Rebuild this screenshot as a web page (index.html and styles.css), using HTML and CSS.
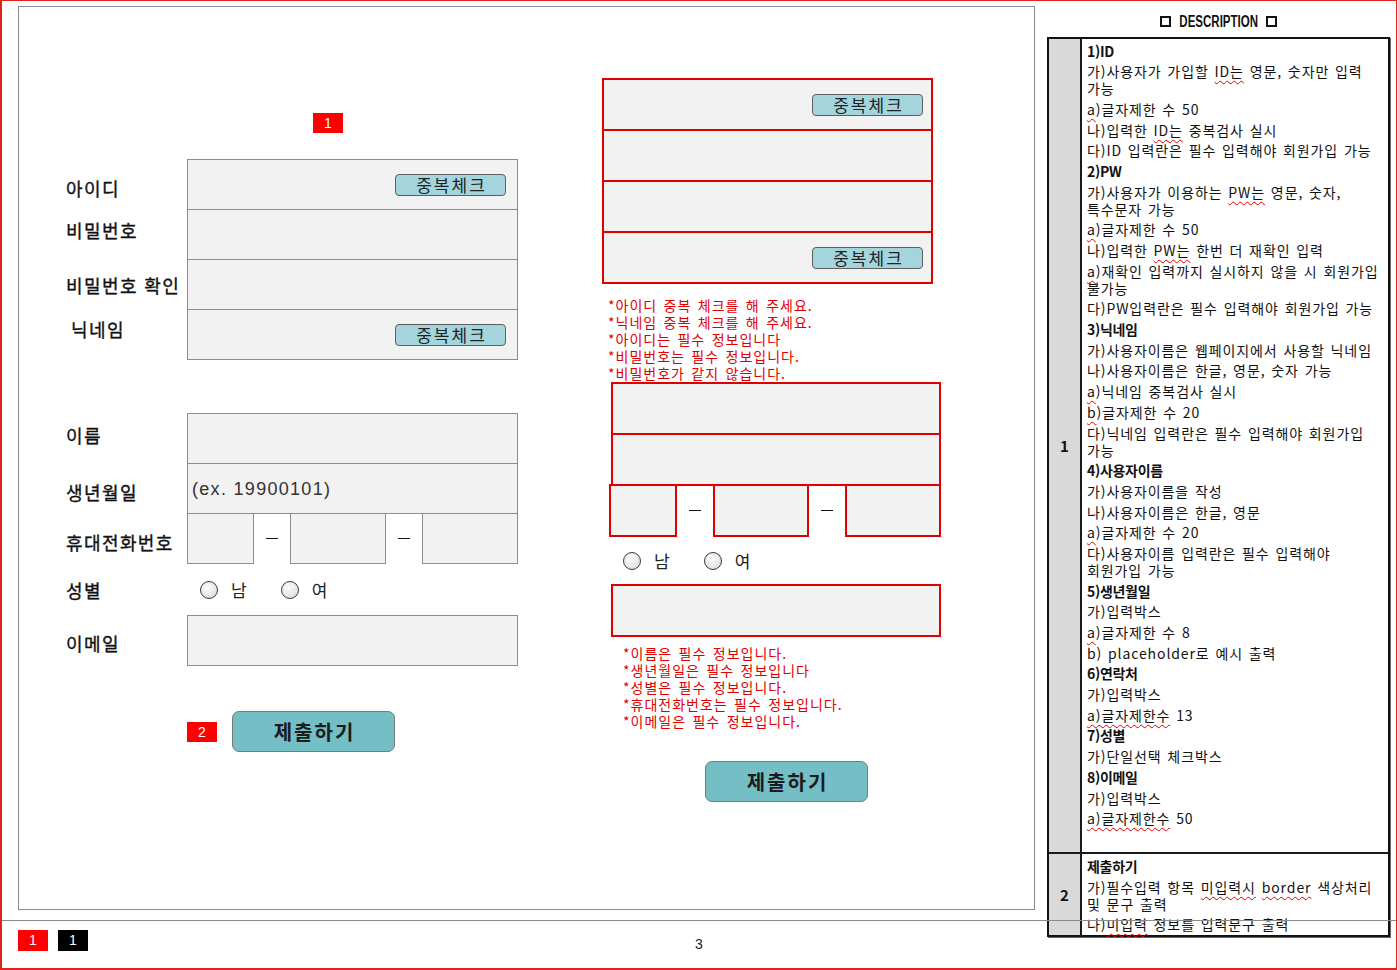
FILE: index.html
```html
<!DOCTYPE html>
<html lang="ko">
<head>
<meta charset="utf-8">
<title>회원가입 화면 설계</title>
<link rel="stylesheet" href="styles.css">
</head>
<body>
<div class="page">
  <div class="sheet">
    <div class="canvas">
      <div class="form-a">
        <div class="badge">1</div>
        <div class="stack">
          <div class="frow"><span class="lbl lbl-id">아이디</span><div class="fld"><button class="chk">중복체크</button></div></div>
          <div class="frow"><span class="lbl lbl-pw">비밀번호</span><div class="fld"></div></div>
          <div class="frow"><span class="lbl">비밀번호 확인</span><div class="fld"></div></div>
          <div class="frow"><span class="lbl lbl-nick">닉네임</span><div class="fld"><button class="chk">중복체크</button></div></div>
        </div>
        <div class="stack stack-2">
          <div class="frow"><span class="lbl lbl-name">이름</span><div class="fld"></div></div>
          <div class="frow"><span class="lbl lbl-dn">생년월일</span><div class="fld fld-ph"><span class="ph">(ex. 19900101)</span></div></div>
          <div class="frow"><span class="lbl lbl-dn">휴대전화번호</span>
            <div class="phone">
              <div class="pbox pb-first"></div><span class="dash"></span><div class="pbox"></div><span class="dash"></span><div class="pbox"></div>
            </div>
          </div>
          <div class="frow plain"><span class="lbl">성별</span>
            <div class="radios"><span class="radio"></span><span class="rtxt">남</span><span class="radio r2"></span><span class="rtxt">여</span></div>
          </div>
          <div class="frow"><span class="lbl lbl-mail">이메일</span><div class="fld"></div></div>
        </div>
        <div class="subrow">
          <div class="badge">2</div>
          <button class="submit">제출하기</button>
        </div>
      </div>

      <div class="form-b">
        <div class="estack">
          <div class="ebox"><button class="chk">중복체크</button></div>
          <div class="ebox"></div>
          <div class="ebox"></div>
          <div class="ebox"><button class="chk">중복체크</button></div>
        </div>
        <div class="msgs m1">
          <p>*아이디 중복 체크를 해 주세요.</p>
          <p>*닉네임 중복 체크를 해 주세요.</p>
          <p>*아이디는 필수 정보입니다</p>
          <p>*비밀번호는 필수 정보입니다.</p>
          <p>*비밀번호가 같지 않습니다.</p>
        </div>
        <div class="estack estack-2">
          <div class="ebox"></div>
          <div class="ebox"></div>
          <div class="ephone">
            <div class="epbox epb-first"></div><span class="dash"></span><div class="epbox"></div><span class="dash"></span><div class="epbox"></div>
          </div>
          <div class="egender">
            <div class="radios"><span class="radio"></span><span class="rtxt">남</span><span class="radio r2"></span><span class="rtxt">여</span></div>
          </div>
          <div class="ebox ebox-mail"></div>
        </div>
        <div class="msgs m2">
          <p>*이름은 필수 정보입니다.</p>
          <p>*생년월일은 필수 정보입니다</p>
          <p>*성별은 필수 정보입니다.</p>
          <p>*휴대전화번호는 필수 정보입니다.</p>
          <p>*이메일은 필수 정보입니다.</p>
        </div>
        <button class="submit submit-b">제출하기</button>
      </div>
    </div>

    <div class="desc">
      <div class="dtitle"><span class="sq"></span><span class="dword">DESCRIPTION</span><span class="sq"></span></div>
      <div class="dtable">
        <div class="dnum">1</div>
        <div class="dtext">
          <p class="h">1)ID</p>
          <p>가)사용자가 가입할 <span class="sp">ID는</span> 영문, 숫자만 입력</p>
          <p class="wr">가능</p>
          <p><span class="sp">a</span>)글자제한 수 50</p>
          <p>나)입력한 <span class="sp">ID는</span> 중복검사 실시</p>
          <p>다)ID 입력란은 필수 입력해야 회원가입 가능</p>
          <p class="h">2)PW</p>
          <p>가)사용자가 이용하는 <span class="sp">PW는</span> 영문, 숫자,</p>
          <p class="wr">특수문자 가능</p>
          <p><span class="sp">a</span>)글자제한 수 50</p>
          <p>나)입력한 <span class="sp">PW는</span> 한번 더 재확인 입력</p>
          <p><span class="sp">a</span>)재확인 입력까지 실시하지 않을 시 회원가입</p>
          <p class="wr">불가능</p>
          <p>다)PW입력란은 필수 입력해야 회원가입 가능</p>
          <p class="h">3)닉네임</p>
          <p>가)사용자이름은 웹페이지에서 사용할 닉네임</p>
          <p>나)사용자이름은 한글, 영문, 숫자 가능</p>
          <p><span class="sp">a</span>)닉네임 중복검사 실시</p>
          <p><span class="sp">b</span>)글자제한 수 20</p>
          <p>다)닉네임 입력란은 필수 입력해야 회원가입</p>
          <p class="wr">가능</p>
          <p class="h">4)사용자이름</p>
          <p>가)사용자이름을 작성</p>
          <p>나)사용자이름은 한글, 영문</p>
          <p><span class="sp">a</span>)글자제한 수 20</p>
          <p>다)사용자이름 입력란은 필수 입력해야</p>
          <p class="wr">회원가입 가능</p>
          <p class="h">5)생년월일</p>
          <p>가)입력박스</p>
          <p><span class="sp">a</span>)글자제한 수 8</p>
          <p>b) placeholder로 예시 출력</p>
          <p class="h">6)연락처</p>
          <p>가)입력박스</p>
          <p><span class="sp">a)글자제한수</span> 13</p>
          <p class="h">7)성별</p>
          <p>가)단일선택 체크박스</p>
          <p class="h">8)이메일</p>
          <p>가)입력박스</p>
          <p><span class="sp">a)글자제한수</span> 50</p>
        </div>
        <div class="dnum r2c">2</div>
        <div class="dtext r2c">
          <p class="h">제출하기</p>
          <p>가)필수입력 항목 <span class="sp">미입력시</span> <span class="sp">border</span> 색상처리</p>
          <p class="wr">및 문구 출력</p>
          <p>나)<span class="sp">미입력</span> 정보를 입력문구 출력</p>
        </div>
      </div>
    </div>
  </div>

  <div class="footer">
    <div class="fbadges"><span class="fbadge red">1</span><span class="fbadge black">1</span></div>
    <div class="pgnum">3</div>
    <div></div>
  </div>
  <div class="cutline"></div>
</div>
</body>
</html>
```

FILE: styles.css
```css
html, body {
  margin: 0;
  padding: 0;
  background: #fff;
}
body {
  font-family: "Noto Sans CJK KR", "Noto Sans", sans-serif;
  color: #111;
}
p { margin: 0; }
button { font-family: inherit; cursor: default; }

.page {
  position: relative;
  width: 1397px;
  height: 970px;
  box-sizing: border-box;
  border: 1px solid #e2231a;
  border-left-width: 2px;
  border-bottom-width: 2px;
  overflow: hidden;
}

.sheet {
  display: flex;
  align-items: flex-start;
  height: 919px;
  box-sizing: border-box;
  padding: 5px 0 0 16px;
}

/* ---------- wireframe canvas ---------- */
.canvas {
  flex: none;
  width: 1017px;
  height: 904px;
  box-sizing: border-box;
  border: 1px solid #8a8a8a;
  display: flex;
  align-items: flex-start;
  padding-left: 47px;
}

.badge {
  width: 30px;
  height: 20px;
  background: #ff0000;
  color: #fff;
  font: 14px/20px "Liberation Sans", sans-serif;
  text-align: center;
  flex: none;
}

.form-a {
  flex: none;
  width: 452px;
  margin-top: 106px;
}
.form-a > .badge { margin-left: 247px; }

.stack { margin-top: 26px; }
.stack-2 { margin-top: 53px; }

.frow {
  display: flex;
  align-items: center;
  height: 51px;
}
.stack .frow + .frow { margin-top: -1px; }
.stack .frow.plain,
.stack .frow.plain + .frow { margin-top: 0; }

.lbl {
  flex: none;
  width: 121px;
  box-sizing: border-box;
  font-size: 18px;
  line-height: 24px;
  letter-spacing: 1.4px;
  color: #111;
  white-space: nowrap;
  -webkit-text-stroke: 0.35px #111;
}
.lbl-id { padding-top: 7px; }
.lbl-pw { padding-bottom: 9px; }
.lbl-nick { padding-bottom: 11px; padding-left: 5px; }
.lbl-name { padding-bottom: 7px; }
.lbl-dn { padding-top: 7px; }
.lbl-mail { padding-top: 5px; }

.fld {
  flex: none;
  width: 331px;
  height: 51px;
  box-sizing: border-box;
  border: 1px solid #8c8c8c;
  background: #f2f2f2;
  display: flex;
  align-items: center;
  justify-content: flex-end;
  padding-right: 11px;
}
.fld-ph {
  justify-content: flex-start;
  padding: 0 0 0 4px;
}
.ph {
  font: 18px/22px "Liberation Sans", sans-serif;
  letter-spacing: 1.3px;
  color: #333;
}

.chk {
  width: 111px;
  height: 22px;
  box-sizing: border-box;
  padding: 0 0 0 2px;
  border: 1px solid #5e5e5e;
  border-radius: 4px;
  background: #a4d4dc;
  color: #222;
  font-size: 17px;
  line-height: 20px;
  letter-spacing: 2px;
}

.phone {
  display: flex;
  align-items: center;
  width: 331px;
  height: 51px;
}
.pbox {
  flex: none;
  width: 96px;
  height: 51px;
  box-sizing: border-box;
  border: 1px solid #8c8c8c;
  background: #f2f2f2;
}
.pbox.pb-first { width: 67px; }

.dash {
  flex: none;
  width: 36px;
  display: flex;
  justify-content: center;
}
.dash::before {
  content: "";
  width: 12px;
  height: 1px;
  background: #111;
}

.radios {
  display: flex;
  align-items: center;
  padding-left: 13px;
}
.radio {
  flex: none;
  width: 18px;
  height: 18px;
  box-sizing: border-box;
  border: 1px solid #3a3a3a;
  border-radius: 50%;
  background: radial-gradient(circle at 40% 35%, #fbfbfb 0%, #e6e6e6 60%, #d4d4d4 100%);
}
.radio.r2 { margin-left: 34px; }
.rtxt {
  margin-left: 13px;
  font-size: 17px;
  line-height: 22px;
  color: #222;
}

.subrow {
  display: flex;
  align-items: center;
  gap: 15px;
  margin-top: 45px;
  padding-left: 121px;
}
.submit {
  flex: none;
  width: 163px;
  height: 41px;
  box-sizing: border-box;
  padding: 0 0 0 2px;
  border: 1px solid #7a7a7a;
  border-radius: 7px;
  background: #74bec6;
  color: #1c1c1c;
  font-size: 20px;
  font-weight: 700;
  letter-spacing: 2px;
  line-height: 38px;
}

/* error-state form */
.form-b {
  flex: none;
  width: 339px;
  margin-left: 84px;
  margin-top: 71px;
}
.estack { width: 331px; }
.ebox {
  height: 53px;
  box-sizing: border-box;
  border: 2px solid #e00000;
  background: #f2f2f2;
  display: flex;
  align-items: center;
  justify-content: flex-end;
  padding-right: 8px;
}
.estack .ebox + .ebox { margin-top: -2px; }
.estack-2 {
  width: 330px;
  margin-left: 9px;
}
.ephone {
  display: flex;
  align-items: center;
  width: 332px;
  height: 53px;
  margin: -2px 0 0 -2px;
}
.epbox {
  flex: none;
  width: 96px;
  height: 53px;
  box-sizing: border-box;
  border: 2px solid #e00000;
  background: #f2f2f2;
}
.epbox.epb-first { width: 68px; }
.egender {
  height: 47px;
  display: flex;
  align-items: center;
}
.egender .radios { padding-left: 12px; }
.estack .egender + .ebox { margin-top: 0; }

.msgs {
  color: #e00000;
  font-size: 14px;
  line-height: 17px;
  letter-spacing: 1px;
  word-spacing: 1.5px;
  white-space: nowrap;
}
.m1 { margin-top: 13px; padding-left: 6px; }
.m2 { margin-top: 7.5px; padding-left: 21px; }
.submit-b {
  display: block;
  margin-top: 31.5px;
  margin-left: 103px;
}

/* ---------- description panel ---------- */
.desc {
  flex: none;
  width: 343px;
  margin-left: 12px;
}
.dtitle {
  height: 31px;
  display: flex;
  align-items: center;
  justify-content: center;
  gap: 8px;
}
.sq {
  flex: none;
  width: 11px;
  height: 11px;
  box-sizing: border-box;
  border: 2px solid #111;
}
.dword {
  display: inline-block;
  font: 700 16px/16px "Liberation Sans", sans-serif;
  color: #111;
  transform: scaleX(0.72);
  margin: 0 -15px;
}

.dtable {
  display: grid;
  grid-template-columns: 33px 1fr;
  grid-template-rows: 813px 83px;
  width: 343px;
  box-sizing: border-box;
  border: 2px solid #111;
  box-shadow: 1px 1px 0 #666;
}
.dnum {
  background: #d9d9d9;
  border-right: 2px solid #1a1a1a;
  display: flex;
  align-items: center;
  justify-content: center;
  font-size: 15px;
  font-weight: 700;
  color: #111;
}
.dtext {
  padding: 3.5px 0 0 5px;
  min-width: 0;
}
.r2c {
  border-top: 2px solid #1a1a1a;
}
.dtext.r2c { padding-top: 4px; }
.dtext p {
  margin: 3.7px 0 0;
  font-size: 14px;
  line-height: 17px;
  letter-spacing: 0.9px;
  word-spacing: 1px;
  white-space: nowrap;
  color: #111;
}
.dtext p:first-child { margin-top: 0; }
.dtext p.wr { margin-top: 0; }
.dtext p.h {
  font-weight: 700;
  letter-spacing: -0.3px;
}
.sp {
  text-decoration: underline wavy #e00000;
  text-decoration-thickness: 1px;
  text-underline-offset: 3px;
  text-decoration-skip-ink: none;
}

/* ---------- footer ---------- */
.footer {
  display: grid;
  grid-template-columns: 1fr auto 1fr;
  align-items: start;
  padding-top: 10px;
}
.fbadges {
  display: flex;
  gap: 10px;
  margin-left: 16px;
}
.fbadge {
  width: 30px;
  height: 21px;
  color: #fff;
  font: 14px/21px "Liberation Sans", sans-serif;
  text-align: center;
}
.fbadge.red { background: #ff0000; }
.fbadge.black { background: #000; }
.pgnum {
  padding-top: 6px;
  font: 14px/16px "Liberation Sans", sans-serif;
  color: #222;
}
.cutline {
  position: absolute;
  left: 0;
  right: 0;
  top: 919px;
  height: 1px;
  background: #8b8b8b;
  z-index: 2;
}
```
